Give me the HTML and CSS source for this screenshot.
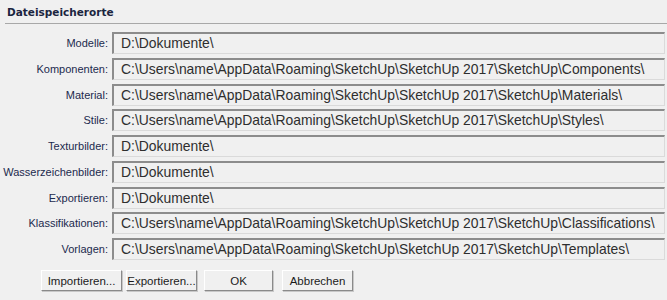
FILE: index.html
```html
<!DOCTYPE html>
<html lang="de">

<head>
  <meta charset="UTF-8">
  <title>Dateispeicherorte</title>
  <link rel="stylesheet" href="styles.css">
</head>

<body>
  <div class="panel">
    <h2 class="title">Dateispeicherorte</h2>

    <div class="paths">
      <label>Modelle:</label>
      <div class="field">D:\Dokumente\</div>
      <label>Komponenten:</label>
      <div class="field">C:\Users\name\AppData\Roaming\SketchUp\SketchUp 2017\SketchUp\Components\</div>
      <label>Material:</label>
      <div class="field">C:\Users\name\AppData\Roaming\SketchUp\SketchUp 2017\SketchUp\Materials\</div>
      <label>Stile:</label>
      <div class="field">C:\Users\name\AppData\Roaming\SketchUp\SketchUp 2017\SketchUp\Styles\</div>
      <label>Texturbilder:</label>
      <div class="field">D:\Dokumente\</div>
      <label>Wasserzeichenbilder:</label>
      <div class="field">D:\Dokumente\</div>
      <label>Exportieren:</label>
      <div class="field">D:\Dokumente\</div>
      <label>Klassifikationen:</label>
      <div class="field">C:\Users\name\AppData\Roaming\SketchUp\SketchUp 2017\SketchUp\Classifications\</div>
      <label>Vorlagen:</label>
      <div class="field">C:\Users\name\AppData\Roaming\SketchUp\SketchUp 2017\SketchUp\Templates\</div>
    </div>

    <div class="buttons">
      <button class="btn btn-import">Importieren...</button>
      <button class="btn btn-export">Exportieren...</button>
      <button class="btn btn-ok">OK</button>
      <button class="btn btn-cancel">Abbrechen</button>
    </div>
  </div>
</body>

</html>
```

FILE: styles.css
```css
body {
  margin: 0;
  background-color: #f0f0f0;
  font-family: "Liberation Sans", Arial, sans-serif;
}

.panel {
  width: 667px;
  height: 300px;
  overflow: hidden;
}

.title {
  margin: 0 0 0 5px;
  padding: 6px 0 4px 2px;
  font-family: "DejaVu Sans", Tahoma, sans-serif;
  font-size: 10.5px;
  font-weight: bold;
  color: #1b2540;
  border-bottom: 1px solid #a8a8a8;
  line-height: 13px;
}

.paths {
  display: grid;
  grid-template-columns: 108px 553px;
  column-gap: 4px;
  row-gap: 3.75px;
  margin-top: 8px;
}

.paths label {
  text-align: right;
  font-size: 11px;
  color: #1c2a4e;
  line-height: 22px;
}

.field {
  height: 22px;
  box-sizing: border-box;
  border-top: 2px solid #8c8c8c;
  border-left: 2px solid #8c8c8c;
  border-right: 1px solid #dadada;
  border-bottom: 1px solid #dadada;
  background: #f0f0f0;
  padding-left: 7px;
  font-size: 13.9px;
  line-height: 19px;
  color: #2e2e2e;
  white-space: nowrap;
}

.buttons {
  display: flex;
  margin: 10px 0 0 41px;
}

.btn {
  height: 21px;
  padding: 0;
  font-family: "Liberation Sans", Arial, sans-serif;
  font-size: 11.5px;
  color: #1b1b1b;
  background: #f0f0f0;
  border: 1px solid #ffffff;
  border-right-color: #8a8a8a;
  border-bottom-color: #8a8a8a;
  box-shadow: 1px 1px 0 #c8c8c8;
}

.btn-import {
  width: 81px;
}

.btn-export {
  width: 71px;
  margin-left: 4px;
}

.btn-ok {
  width: 69px;
  margin-left: 7px;
}

.btn-cancel {
  width: 71px;
  margin-left: 9px;
}
```
